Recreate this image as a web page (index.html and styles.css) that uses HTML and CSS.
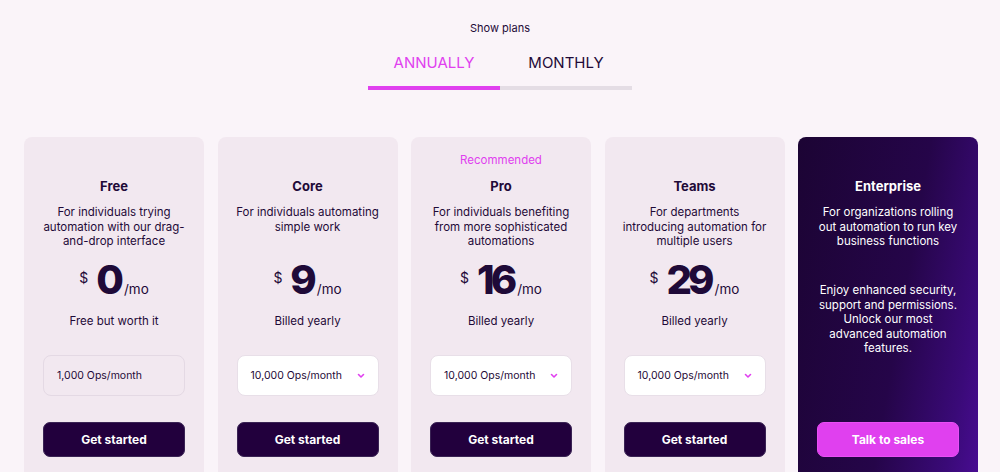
FILE: index.html
```html
<!DOCTYPE html>
<html lang="en">

<head>
    <meta charset="UTF-8">
    <meta name="viewport" content="width=device-width, initial-scale=1.0">
    <title>Plans</title>
    <link rel="stylesheet" href="styles.css">
</head>

<body>
    <div class="switcher">
        <p class="show-label">Show plans</p>
        <div class="tabs">
            <div class="tab active">ANNUALLY</div>
            <div class="tab">MONTHLY</div>
        </div>
    </div>

    <div class="plans">
        <div class="plan">
            <div class="rec"></div>
            <h2>Free</h2>
            <p class="desc">For individuals trying automation with our drag-and-drop interface</p>
            <div class="price"><span class="cur">$</span><span class="num">0</span><span class="per">/mo</span></div>
            <p class="billed">Free but worth it</p>
            <div class="ops static"><span>1,000 Ops/month</span></div>
            <button class="btn">Get started</button>
        </div>

        <div class="plan">
            <div class="rec"></div>
            <h2>Core</h2>
            <p class="desc">For individuals automating simple work</p>
            <div class="price"><span class="cur">$</span><span class="num">9</span><span class="per">/mo</span></div>
            <p class="billed">Billed yearly</p>
            <div class="ops"><span>10,000 Ops/month</span>
                <svg width="8" height="6" viewBox="0 0 8 6"><path d="M1.5 1.5 L4 4 L6.5 1.5" fill="none" stroke="#e040ef" stroke-width="1.6" stroke-linecap="round" stroke-linejoin="round"/></svg>
            </div>
            <button class="btn">Get started</button>
        </div>

        <div class="plan">
            <div class="rec">Recommended</div>
            <h2>Pro</h2>
            <p class="desc">For individuals benefiting from more sophisticated automations</p>
            <div class="price"><span class="cur">$</span><span class="num">16</span><span class="per">/mo</span></div>
            <p class="billed">Billed yearly</p>
            <div class="ops"><span>10,000 Ops/month</span>
                <svg width="8" height="6" viewBox="0 0 8 6"><path d="M1.5 1.5 L4 4 L6.5 1.5" fill="none" stroke="#e040ef" stroke-width="1.6" stroke-linecap="round" stroke-linejoin="round"/></svg>
            </div>
            <button class="btn">Get started</button>
        </div>

        <div class="plan">
            <div class="rec"></div>
            <h2>Teams</h2>
            <p class="desc">For departments introducing automation for multiple users</p>
            <div class="price"><span class="cur">$</span><span class="num">29</span><span class="per">/mo</span></div>
            <p class="billed">Billed yearly</p>
            <div class="ops"><span>10,000 Ops/month</span>
                <svg width="8" height="6" viewBox="0 0 8 6"><path d="M1.5 1.5 L4 4 L6.5 1.5" fill="none" stroke="#e040ef" stroke-width="1.6" stroke-linecap="round" stroke-linejoin="round"/></svg>
            </div>
            <button class="btn">Get started</button>
        </div>

        <div class="plan enterprise">
            <div class="rec"></div>
            <h2>Enterprise</h2>
            <p class="desc">For organizations rolling out automation to run key business functions</p>
            <p class="extra">Enjoy enhanced security, support and permissions. Unlock our most advanced automation features.</p>
            <button class="btn sales">Talk to sales</button>
        </div>
    </div>
</body>

</html>
```

FILE: styles.css
```css
body {
    margin: 0;
    font-family: Inter, "Noto Sans", sans-serif;
    background-color: #faf4f9;
    color: #1f0a38;
    overflow: hidden;
}

.switcher {
    display: flex;
    flex-direction: column;
    align-items: center;
    padding-top: 21px;
}

.show-label {
    margin: 0;
    font-size: 11px;
    line-height: 14px;
}

.tabs {
    display: flex;
    margin-top: 18px;
}

.tab {
    width: 132px;
    text-align: center;
    font-size: 15px;
    line-height: 20px;
    padding-bottom: 13px;
    border-bottom: 4px solid #e4dde5;
}

.tab.active {
    color: #e040ef;
    border-bottom-color: #e040ef;
}

.plans {
    display: flex;
    gap: 13.5px;
    padding: 0 22px 0 24px;
    margin-top: 47px;
}

.plan {
    width: 180px;
    height: 360px;
    flex-shrink: 0;
    box-sizing: border-box;
    padding: 16px 19px 0;
    background-color: #f2e8f0;
    border-radius: 8px;
    text-align: center;
}

.rec {
    height: 14px;
    font-size: 11.5px;
    line-height: 14px;
    color: #e040ef;
}

h2 {
    margin: 11px 0 0;
    font-size: 13px;
    line-height: 16px;
    font-weight: 700;
}

.desc {
    margin: 11px -6px 0;
    height: 44px;
    font-size: 11.5px;
    line-height: 14.6px;
}

.price {
    margin-top: 9px;
    height: 40px;
    line-height: 40px;
    white-space: nowrap;
}

.cur {
    font-size: 14px;
    vertical-align: 11px;
    margin-right: 8px;
}

.num {
    font-size: 40px;
    font-weight: 800;
    letter-spacing: -4px;
}

.per {
    font-size: 13.5px;
    margin-left: 4px;
}

.billed {
    margin: 16px 0 0;
    font-size: 11.5px;
    line-height: 14px;
}

.ops {
    display: flex;
    justify-content: space-between;
    align-items: center;
    height: 41px;
    box-sizing: border-box;
    margin-top: 27px;
    padding: 0 13px 0 13px;
    background-color: #fff;
    border: 1px solid #e8dfe8;
    border-radius: 8px;
    font-size: 10.5px;
    white-space: nowrap;
}

.ops.static {
    background-color: transparent;
    border-color: #e4d9e4;
}

.btn {
    display: block;
    width: 100%;
    height: 35px;
    margin-top: 26px;
    border: 1px solid #3a2354;
    border-radius: 7px;
    background-color: #22003d;
    color: #fff;
    font-family: inherit;
    font-size: 12px;
    font-weight: 700;
}

.enterprise {
    color: #fff;
    background: linear-gradient(100deg, #1c0434 0%, #250549 55%, #3a0a78 85%, #4a0c95 100%);
}

.enterprise .desc {
    margin: 11px 0 0;
}

.extra {
    margin: 34px 2px 0;
    font-size: 11.5px;
    line-height: 14.6px;
}

.btn.sales {
    margin-top: 66px;
    background-color: #e040ef;
    border-color: #e94ff5;
}
```
